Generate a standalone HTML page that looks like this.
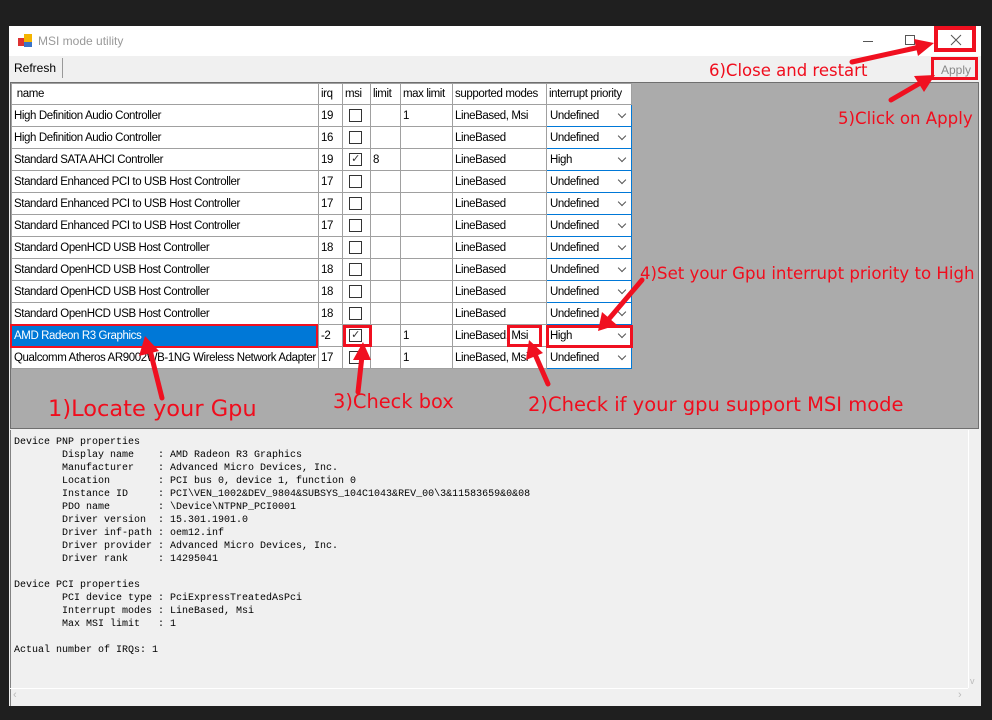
<!DOCTYPE html>
<html><head><meta charset="utf-8"><style>
*{margin:0;padding:0;box-sizing:border-box}
body{width:992px;height:720px;background:#1f1f1f;position:relative;overflow:hidden;font-family:"Liberation Sans",sans-serif}
.win{position:absolute;left:9px;top:26px;width:972px;height:680px;background:#f0f0f0}
.title{position:absolute;left:0;top:0;width:972px;height:30px;background:#fff}
.grid{position:absolute;left:10px;top:82px;width:969px;height:347px;background:#ababab;border:1px solid #6f6f6f}
table{border-collapse:collapse;table-layout:fixed;width:620px;position:absolute;left:11px;top:83px;font-size:11.5px;letter-spacing:-0.4px}
td{border:1px solid #a0a0a0;background:#fff;height:22px;padding:0 2px;white-space:nowrap;overflow:hidden;color:#000}
tr.h td{height:21px}
.cb{display:inline-block;width:13px;height:13px;border:1px solid #333;vertical-align:middle;margin-left:4px;font-size:11px;line-height:11px;text-align:center;color:#333}
.cmb{position:relative;border:1px solid #0078d7 !important;padding-left:3px}
.cmb:after{content:"";position:absolute;right:6px;top:6px;width:5px;height:5px;border-right:1px solid #555;border-bottom:1px solid #555;transform:rotate(45deg)}
.bot{position:absolute;left:10px;top:430px;width:969px;height:276px;background:#f0f0f0;border-left:1px solid #828282}
pre{position:absolute;left:14px;top:436px;font-family:"Liberation Mono",monospace;font-size:10px;line-height:13px;color:#000}
.r{position:absolute;color:#f00d1d;font-family:"DejaVu Sans",sans-serif;white-space:nowrap}
.box{position:absolute;border:3px solid #f01020}
</style></head><body>
<div class="win">
<div class="title">
<svg style="position:absolute;left:9px;top:8px" width="14" height="14"><rect x="0" y="4" width="6" height="8" fill="#d33"/><rect x="6" y="0" width="8" height="8" fill="#f4b400"/><rect x="6" y="8" width="8" height="5" fill="#3a73c8"/></svg>
<div style="position:absolute;left:29px;top:8px;font-size:12px;color:#999">MSI mode utility</div>
<div style="position:absolute;left:854px;top:15px;width:10px;height:1px;background:#555"></div>
<div style="position:absolute;left:896px;top:9px;width:10px;height:10px;border:1px solid #555"></div>
<svg style="position:absolute;left:941px;top:8px" width="12" height="12"><path d="M1 1L11 11M11 1L1 11" stroke="#555" stroke-width="1"/></svg>
</div>
<div style="position:absolute;left:5px;top:35px;font-size:12px">Refresh</div>
<div style="position:absolute;left:53px;top:32px;width:1px;height:20px;background:#999"></div>
<div style="position:absolute;left:932px;top:37px;font-size:12px;color:#888">Apply</div>
</div>
<div class="grid"></div>
<table>
<colgroup><col style="width:307px"><col style="width:24px"><col style="width:28px"><col style="width:30px"><col style="width:52px"><col style="width:94px"><col style="width:85px"></colgroup>
<tr class="h"><td>&nbsp;name</td><td>irq</td><td>msi</td><td>limit</td><td>max limit</td><td>supported modes</td><td>interrupt priority</td></tr>
<tr><td>High Definition Audio Controller</td><td>19</td><td><span class="cb"></span></td><td></td><td>1</td><td>LineBased, Msi</td><td class="cmb">Undefined</td></tr>
<tr><td>High Definition Audio Controller</td><td>16</td><td><span class="cb"></span></td><td></td><td></td><td>LineBased</td><td class="cmb">Undefined</td></tr>
<tr><td>Standard SATA AHCI Controller</td><td>19</td><td><span class="cb">✓</span></td><td>8</td><td></td><td>LineBased</td><td class="cmb">High</td></tr>
<tr><td>Standard Enhanced PCI to USB Host Controller</td><td>17</td><td><span class="cb"></span></td><td></td><td></td><td>LineBased</td><td class="cmb">Undefined</td></tr>
<tr><td>Standard Enhanced PCI to USB Host Controller</td><td>17</td><td><span class="cb"></span></td><td></td><td></td><td>LineBased</td><td class="cmb">Undefined</td></tr>
<tr><td>Standard Enhanced PCI to USB Host Controller</td><td>17</td><td><span class="cb"></span></td><td></td><td></td><td>LineBased</td><td class="cmb">Undefined</td></tr>
<tr><td>Standard OpenHCD USB Host Controller</td><td>18</td><td><span class="cb"></span></td><td></td><td></td><td>LineBased</td><td class="cmb">Undefined</td></tr>
<tr><td>Standard OpenHCD USB Host Controller</td><td>18</td><td><span class="cb"></span></td><td></td><td></td><td>LineBased</td><td class="cmb">Undefined</td></tr>
<tr><td>Standard OpenHCD USB Host Controller</td><td>18</td><td><span class="cb"></span></td><td></td><td></td><td>LineBased</td><td class="cmb">Undefined</td></tr>
<tr><td>Standard OpenHCD USB Host Controller</td><td>18</td><td><span class="cb"></span></td><td></td><td></td><td>LineBased</td><td class="cmb">Undefined</td></tr>
<tr><td style="background:#0078d7;color:#fff">AMD Radeon R3 Graphics</td><td>-2</td><td><span class="cb">✓</span></td><td></td><td>1</td><td>LineBased, Msi</td><td class="cmb">High</td></tr>
<tr><td>Qualcomm Atheros AR9002WB-1NG Wireless Network Adapter</td><td>17</td><td><span class="cb"></span></td><td></td><td>1</td><td>LineBased, Msi</td><td class="cmb">Undefined</td></tr>
</table>
<div class="bot"></div>
<pre>Device PNP properties
        Display name    : AMD Radeon R3 Graphics
        Manufacturer    : Advanced Micro Devices, Inc.
        Location        : PCI bus 0, device 1, function 0
        Instance ID     : PCI\VEN_1002&amp;DEV_9804&amp;SUBSYS_104C1043&amp;REV_00\3&amp;11583659&amp;0&amp;08
        PDO name        : \Device\NTPNP_PCI0001
        Driver version  : 15.301.1901.0
        Driver inf-path : oem12.inf
        Driver provider : Advanced Micro Devices, Inc.
        Driver rank     : 14295041

Device PCI properties
        PCI device type : PciExpressTreatedAsPci
        Interrupt modes : LineBased, Msi
        Max MSI limit   : 1

Actual number of IRQs: 1</pre>
<div style="position:absolute;left:10px;top:688px;width:958px;height:1px;background:#fff"></div>
<div style="position:absolute;left:968px;top:430px;width:1px;height:258px;background:#fff"></div>
<div style="position:absolute;left:13px;top:689px;font-size:11px;color:#bbb">‹</div>
<div style="position:absolute;left:958px;top:689px;font-size:11px;color:#bbb">›</div>
<div style="position:absolute;left:970px;top:676px;font-size:9px;color:#bbb">v</div>

<div class="box" style="left:10px;top:324px;width:308px;height:24px;border-width:2px"></div>
<div class="box" style="left:343px;top:325px;width:29px;height:22px"></div>
<div class="box" style="left:507px;top:325px;width:35px;height:22px"></div>
<div class="box" style="left:546px;top:325px;width:87px;height:23px"></div>
<div class="box" style="left:931px;top:57px;width:47px;height:23px"></div>
<div class="box" style="left:934px;top:26px;width:42px;height:26px;border-width:4px"></div>

<svg style="position:absolute;left:0;top:0" width="992" height="720">
<g stroke="#f01020" stroke-width="5" fill="#f01020" stroke-linecap="round">
<line x1="162" y1="398" x2="150" y2="350"/><polygon points="145,336 139,356 159,351" stroke="none"/>
<line x1="358" y1="392" x2="362" y2="356"/><polygon points="363,342 353,360 371,360" stroke="none"/>
<line x1="548" y1="384" x2="534" y2="352"/><polygon points="529,340 526,360 543,353" stroke="none"/>
<line x1="642" y1="280" x2="608" y2="320"/><polygon points="598,331 602,312 617,325" stroke="none"/>
<line x1="891" y1="100" x2="922" y2="82"/><polygon points="935,75 914,76 924,92" stroke="none"/>
<line x1="852" y1="62" x2="920" y2="47"/><polygon points="934,43 914,39 918,56" stroke="none"/>
</g></svg>
<div class="r" style="left:48px;top:396px;font-size:22.5px">1)Locate your Gpu</div>
<div class="r" style="left:333px;top:390px;font-size:19.4px">3)Check box</div>
<div class="r" style="left:528px;top:393px;font-size:19.5px">2)Check if your gpu support MSI mode</div>
<div class="r" style="left:640px;top:264px;font-size:16.6px">4)Set your Gpu interrupt priority to High</div>
<div class="r" style="left:838px;top:109px;font-size:16.6px">5)Click on Apply</div>
<div class="r" style="left:709px;top:61px;font-size:16.5px">6)Close and restart</div>
</body></html>
